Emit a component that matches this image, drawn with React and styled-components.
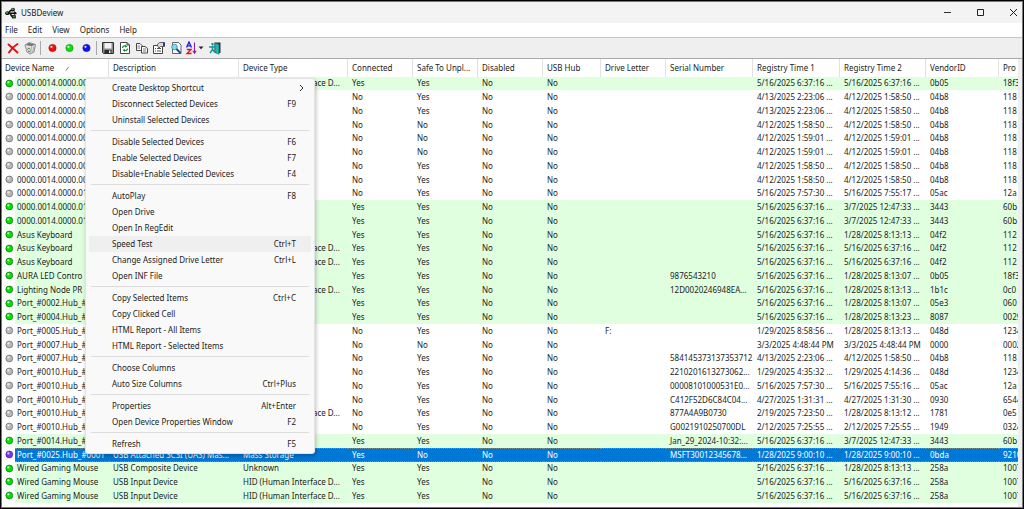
import React from "react";
import styled, { createGlobalStyle } from "styled-components";

const GlobalStyle = createGlobalStyle`
  * { box-sizing: border-box; }
  body { margin: 0; background: #fff; }
  body, button, table { font-family: "Noto Sans", "Open Sans", sans-serif; font-size: 8px; line-height: 12px; color: #1c1c1c; }
`;

const Frame = styled.div`
  position: relative;
  display: flex;
  flex-direction: column;
  min-height: 100vh;
  overflow: hidden;
  background: #fff;
  border: 1px solid #000;
`;

const Inner = styled.div`
  flex: 1;
  display: flex;
  flex-direction: column;
  border: 1px solid #7a7a7a;
`;

const TitleBar = styled.header`
  display: flex;
  align-items: center;
  height: 21px;
  padding-left: 3px;
  background: #f3f3f3;
`;

const Title = styled.h1`
  flex: 1;
  margin: 0 0 0 4px;
  font-size: 8px;
  font-weight: 400;
`;

const PlainButton = styled.button`
  display: flex;
  align-items: center;
  justify-content: center;
  margin: 0;
  padding: 0;
  border: 0;
  background: transparent;
`;

const CaptionButton = styled(PlainButton)`
  width: 33px;
  height: 21px;
  &:last-child { margin-right: -8px; }
`;

const MenuBar = styled.nav`
  display: flex;
  height: 15px;
  border-bottom: 1px solid #c6c6c6;
`;

const MenuBarButton = styled(PlainButton)`
  padding: 0 7px 0 3px;
`;

const Toolbar = styled.div`
  display: flex;
  align-items: center;
  height: 21px;
  padding-left: 2px;
  background: #efefef;
  border-bottom: 1px solid #a9a9a9;
`;

const ToolButton = styled(PlainButton)`
  width: ${(p) => (p.$wide ? 22 : 17)}px;
  height: 18px;
`;

const ToolSeparator = styled.span`
  width: 1px;
  height: 14px;
  margin: 0 2px;
  background: #a8a8a8;
`;

const ListView = styled.main`
  flex: 1;
  padding-bottom: 3px;
  border-right: 4px solid #efefef;
  overflow: hidden;
`;

const Table = styled.table`
  width: 100%;
  table-layout: fixed;
  border-collapse: separate;
  border-spacing: 0;
`;

const Col = styled.col`
  width: ${(p) => (p.$w ? `${p.$w}px` : "auto")};
`;

const HeadCell = styled.th`
  height: 18px;
  padding: 0 0 0 ${(p) => (p.$first ? 3 : 4)}px;
  font-weight: 400;
  text-align: left;
  white-space: nowrap;
  overflow: hidden;
  border-right: 1px solid #e2e2e2;
  &:last-child { border-right: 0; }
`;

const SortMark = styled.svg`
  margin-left: 11px;
`;

const rowColors = {
  on: ["#dfffdf", "#1c1c1c"],
  off: ["#ffffff", "#1c1c1c"],
  selected: ["#0078d7", "#ffffff"],
};

const Row = styled.tr`
  height: 14px;
  &:nth-child(4n + 1) { height: 13px; }
  color: ${(p) => rowColors[p.$state][1]};
`;

const Cell = styled.td`
  height: inherit;
  padding: 0 0 1px ${(p) => (p.$name ? 2 : 4)}px;
  background: ${(p) => rowColors[p.$state][0]};
  white-space: nowrap;
  overflow: hidden;
  ${(p) =>
    p.$state === "selected" &&
    "border-top: 1px dotted #6f8f9f; border-bottom: 1px dotted #6f8f9f; line-height: 11px;"}
`;

const LedCell = styled.td`
  height: inherit;
  padding: 0 0 1px 3px;
  line-height: 0;
`;

const Popup = styled.ul`
  position: absolute;
  left: 84px;
  top: 77px;
  width: 230px;
  margin: 0;
  padding: 1px 3px;
  list-style: none;
  background: #f9f9f9;
  border: 1px solid #e3e3e3;
  border-radius: 3px;
  box-shadow: 1px 2px 4px rgba(0, 0, 0, 0.25);
`;

const PopupButton = styled(PlainButton)`
  width: 100%;
  height: 16px;
  padding: 0 15px 0 23px;
  justify-content: space-between;
  border-radius: 2px;
  background: ${(p) => (p.$hot ? "#efefef" : "transparent")};
`;

const Divider = styled.li`
  height: 6px;
  padding: 2px 2px 3px;
  background: #dcdcdc content-box;
`;

const SubmenuArrow = styled.svg`
  margin-right: -8px;
`;

const Icon = ({ w = 14, children }) => (
  <svg width={w} height="14" viewBox={`0 0 ${w} 14`} aria-hidden="true">
    {children}
  </svg>
);

const UsbLogo = () => (
  <svg width="12" height="12" viewBox="0 0 12 12" aria-hidden="true">
    <path d="M2 6.3H10M3.5 6L5.5 3.5H8M5 6.5L7 9.5H9" fill="none" stroke="#111" strokeWidth="1.5" />
    <ellipse cx="2.3" cy="6.2" rx="2.1" ry="1.9" fill="#111" />
    <ellipse cx="2" cy="5.8" rx="1.2" ry="1" fill="#3d9a3d" />
    <circle cx="8" cy="2.6" r="1.9" fill="#111" />
    <circle cx="7.8" cy="2.3" r="1" fill="#4aa84a" />
    <path d="M9.2 4L12 6.2L9.2 8.3Z" fill="#111" />
    <path d="M7 8.2H10.8V11.4H7Z" fill="#111" />
    <path d="M7.8 9H9.8V10.4H7.8Z" fill="#3d9a3d" />
  </svg>
);

const Ball = ({ color, dark }) => (
  <Icon>
    <circle cx="7.5" cy="7" r="3.6" fill={color} stroke={dark} strokeWidth=".7" />
    <circle cx="6.4" cy="5.8" r="1.1" fill="#fff" opacity=".85" />
  </Icon>
);

const ledColors = {
  on: ["#00e400", "#087d08"],
  off: ["#b9b9b9", "#707070"],
  selected: ["#7a35e8", "#4a22a0"],
};

const Led = ({ state }) => (
  <svg width="9" height="9" viewBox="0 0 9 9" role="img" aria-label={state}>
    <circle cx="4.3" cy="4.5" r="3.4" fill={ledColors[state][0]} stroke={ledColors[state][1]} strokeWidth=".8" />
    <circle cx="3.3" cy="3.3" r="1.1" fill="#fff" opacity=".8" />
  </svg>
);

const icons = {
  remove: (
    <Icon>
      <path d="M2.5 3.500L11.500 11.500" fill="none" stroke="#e01010" strokeWidth="1.900" strokeLinecap="round" />
      <path d="M11.500 3C8 5 5 8 3 11.500" fill="none" stroke="#e01010" strokeWidth="1.900" strokeLinecap="round" />
    </Icon>
  ),
  uninstall: (
    <Icon>
      <path d="M2 4L6 1.500L12.500 3.500L11 11L7 13L4 11Z" fill="#e2e2e2" stroke="#777" strokeWidth=".8" />
      <path d="M2.500 4L6 2L12 3.500L8.500 5.300Z" fill="#777" />
      <path d="M8.700 5.500L7.500 12.500M11 5L9.700 11" fill="none" stroke="#999" strokeWidth=".7" />
      <path d="M4.500 8.500L5.700 7L7.200 8.300M7.200 9.500L6.300 10.700L5 10" fill="none" stroke="#2b8c2b" strokeWidth="1" />
    </Icon>
  ),
  save: (
    <Icon>
      <path d="M1.500 1.500H12.500V12.500H2.500L1.500 11.500Z" fill="#8a8a8a" stroke="#333" />
      <path d="M3.500 2H10.500V7.500H3.500Z" fill="#f2f2f2" />
      <path d="M3.500 9H10.500V12.500H3.500Z" fill="#2a2a2a" />
      <path d="M8 9.500H9.500V12H8Z" fill="#eee" />
    </Icon>
  ),
  refresh: (
    <Icon>
      <path d="M2.500 1.500H9L11.500 4V12.500H2.500Z" fill="#fff" stroke="#444" />
      <path d="M9 1.500V4H11.500" fill="none" stroke="#444" />
      <path d="M4.500 7C4.500 5 6.500 4.500 8 5.300M9.500 7.500C9.500 9.500 7.500 10 6 9.200" fill="none" stroke="#109030" strokeWidth="1.2" />
      <path d="M7.300 3.500L9.500 5.800L7 6.500ZM6.700 11L4.500 8.700L7 8Z" fill="#109030" />
    </Icon>
  ),
  copy: (
    <Icon>
      <path d="M1.500 2.500H5L7 4.500V9.500H1.500Z" fill="#fff" stroke="#333" strokeWidth=".9" />
      <path d="M2.500 5H5M2.500 7H5" stroke="#555" strokeWidth=".8" />
      <path d="M6.500 5.500H10L12.500 7.500V12H6.500Z" fill="#fff" stroke="#333" strokeWidth=".9" />
      <path d="M8 8H11M8 10H11" stroke="#555" strokeWidth=".8" />
    </Icon>
  ),
  properties: (
    <Icon>
      <path d="M1.500 4.500H10.500V12.500H1.500Z" fill="#fff" stroke="#444" />
      <path d="M3 7.500H4M3 10H4M5 7.500H9M5 10H9" stroke="#555" />
      <path d="M5 4L7.500 1.500H12.500V5.500H8.500L7 7Z" fill="#d8d8e4" stroke="#444" strokeWidth=".8" />
      <path d="M11 1.500H13V5H11Z" fill="#34349c" />
    </Icon>
  ),
  find: (
    <Icon>
      <path d="M3.500 1.500H9.500L12 4V12.500H3.500Z" fill="#fff" stroke="#555" strokeWidth=".9" />
      <circle cx="5.500" cy="6" r="2.800" fill="#7cdcf4" stroke="#3d8bac" strokeWidth=".8" />
      <path d="M7.500 8L11.500 12" stroke="#1a3c9c" strokeWidth="1.800" />
    </Icon>
  ),
  sort: (
    <Icon w={20}>
      <path d="M1.500 6.500L4 1L6.500 6.500M2.500 4.800H5.500" fill="none" stroke="#1a1af0" strokeWidth="1.300" />
      <path d="M1.800 8.500H6L2 12.500H6.500" fill="none" stroke="#e81010" strokeWidth="1.300" />
      <path d="M9.500 1.500V12M7.800 9.800L9.500 12.200L11.200 9.800" fill="none" stroke="#8a1f9c" strokeWidth="1.100" />
      <path d="M13.500 5.500H18.500L16 8.300Z" fill="#222" />
    </Icon>
  ),
  exit: (
    <Icon>
      <path d="M6.500 1.500H12.500V12H6.500Z" fill="#333" />
      <path d="M7 2L11 3.500V13.300L7 11.500Z" fill="#22b5b5" stroke="#116a6a" strokeWidth=".6" />
      <circle cx="4.500" cy="3" r="1.200" fill="#119a9a" />
      <path d="M1 6H7M4.500 4.500V8.500L2 12M4.500 8.500L6.500 11" fill="none" stroke="#119a9a" strokeWidth="1.500" />
    </Icon>
  ),
};

const tools = [
  ["Delete", icons.remove],
  ["Uninstall", icons.uninstall],
  null,
  ["Disconnect", <Ball color="#f01010" dark="#a00808" />],
  ["Enable", <Ball color="#10e010" dark="#089008" />],
  ["Disable", <Ball color="#1515f0" dark="#0808a0" />],
  null,
  ["Save", icons.save],
  ["Refresh", icons.refresh],
  ["Copy", icons.copy],
  ["Properties", icons.properties],
  ["Find", icons.find],
  ["Sort", icons.sort, true],
  ["Exit", icons.exit],
];

const columns = [
  ["Description", 130],
  ["Device Type", 109],
  ["Connected", 65],
  ["Safe To Unpl...", 65],
  ["Disabled", 65],
  ["USB Hub", 58],
  ["Drive Letter", 65],
  ["Serial Number", 87],
  ["Registry Time 1", 87],
  ["Registry Time 2", 86],
  ["VendorID", 73],
  ["Pro", 0],
];

const HID = "HID (Human Interface D...";
const COMP = "USB Composite Device";
const INPUT = "USB Input Device";
const MASS = "Mass Storage";
const BOOT = "5/16/2025 6:37:16 ...";
const A = "4/12/2025 1:58:50 ...";
const B = "4/12/2025 1:59:01 ...";
const C = "4/13/2025 2:23:06 ...";
const D = "1/28/2025 8:13:13 ...";
const MAR = "3/7/2025 12:47:33 ...";

// state, name, description, type, safe to unplug, drive, serial, time 1, time 2, vendor, product
const devices = [
  ["on", "0000.0014.0000.004", "", HID, "Yes", "", "", BOOT, BOOT, "0b05", "18f3"],
  ["off", "0000.0014.0000.007", "", "", "Yes", "", "", C, A, "04b8", "118"],
  ["off", "0000.0014.0000.007", "", "", "Yes", "", "", C, A, "04b8", "118"],
  ["off", "0000.0014.0000.007", "", "", "No", "", "", A, A, "04b8", "118"],
  ["off", "0000.0014.0000.007", "", "", "No", "", "", B, B, "04b8", "118"],
  ["off", "0000.0014.0000.007", "", "", "No", "", "", B, B, "04b8", "118"],
  ["off", "0000.0014.0000.007", "", "", "Yes", "", "", A, A, "04b8", "118"],
  ["off", "0000.0014.0000.007", "", "", "Yes", "", "", A, A, "04b8", "118"],
  ["off", "0000.0014.0000.010", "", "", "Yes", "", "", "5/16/2025 7:57:30 ...", "5/16/2025 7:55:17 ...", "05ac", "12a"],
  ["on", "0000.0014.0000.014", "", "", "Yes", "", "", BOOT, MAR, "3443", "60b"],
  ["on", "0000.0014.0000.014", "", "", "Yes", "", "", BOOT, MAR, "3443", "60b"],
  ["on", "Asus Keyboard", "", "", "Yes", "", "", BOOT, D, "04f2", "112"],
  ["on", "Asus Keyboard", "", HID, "Yes", "", "", BOOT, BOOT, "04f2", "112"],
  ["on", "Asus Keyboard", "", HID, "Yes", "", "", BOOT, BOOT, "04f2", "112"],
  ["on", "AURA LED Contro", "", "", "Yes", "", "9876543210", BOOT, "1/28/2025 8:13:07 ...", "0b05", "18f3"],
  ["on", "Lighting Node PR", "", HID, "Yes", "", "12D0020246948EA...", BOOT, D, "1b1c", "0c0"],
  ["on", "Port_#0002.Hub_#", "", "", "Yes", "", "", BOOT, "1/28/2025 8:13:07 ...", "05e3", "060"],
  ["on", "Port_#0004.Hub_#", "", "", "Yes", "", "", BOOT, "1/28/2025 8:13:23 ...", "8087", "0029"],
  ["off", "Port_#0005.Hub_#", "", "", "Yes", "F:", "", "1/29/2025 8:58:56 ...", D, "048d", "1234"],
  ["off", "Port_#0007.Hub_#", "", "", "No", "", "", "3/3/2025 4:48:44 PM", "3/3/2025 4:48:44 PM", "0000", "0002"],
  ["off", "Port_#0007.Hub_#", "", "", "Yes", "", "584145373137353712", C, A, "04b8", "118"],
  ["off", "Port_#0010.Hub_#", "", "", "Yes", "", "2210201613273062...", "1/29/2025 4:35:32 ...", "1/29/2025 4:14:36 ...", "048d", "1234"],
  ["off", "Port_#0010.Hub_#", "", "", "Yes", "", "00008101000531E0...", "5/16/2025 7:57:30 ...", "5/16/2025 7:55:16 ...", "05ac", "12a"],
  ["off", "Port_#0010.Hub_#", "", "", "Yes", "", "C412F52D6C84C04...", "4/27/2025 1:31:31 ...", "4/27/2025 1:31:30 ...", "0930", "6544"],
  ["off", "Port_#0010.Hub_#", "", HID, "Yes", "", "877A4A9B0730", "2/19/2025 7:23:50 ...", "1/28/2025 8:13:12 ...", "1781", "0e5"],
  ["off", "Port_#0010.Hub_#", "", "", "Yes", "", "G0021910250700DL", "2/12/2025 7:25:55 ...", "2/12/2025 7:25:55 ...", "1949", "0324"],
  ["on", "Port_#0014.Hub_#", "", "", "Yes", "", "Jan_29_2024-10:32:...", BOOT, MAR, "3443", "60b"],
  ["selected", "Port_#0025.Hub_#0001", "USB Attached SCSI (UAS) Mas...", MASS, "No", "", "MSFT30012345678...", "1/28/2025 9:00:10 ...", "1/28/2025 9:00:10 ...", "0bda", "9210"],
  ["on", "Wired Gaming Mouse", COMP, "Unknown", "Yes", "", "", BOOT, D, "258a", "1007"],
  ["on", "Wired Gaming Mouse", INPUT, HID, "Yes", "", "", BOOT, BOOT, "258a", "1007"],
  ["on", "Wired Gaming Mouse", INPUT, HID, "Yes", "", "", BOOT, BOOT, "258a", "1007"],
];

const popupItems = [
  ["Create Desktop Shortcut", ">"],
  ["Disconnect Selected Devices", "F9"],
  ["Uninstall Selected Devices"],
  null,
  ["Disable Selected Devices", "F6"],
  ["Enable Selected Devices", "F7"],
  ["Disable+Enable Selected Devices", "F4"],
  null,
  ["AutoPlay", "F8"],
  ["Open Drive"],
  ["Open In RegEdit"],
  ["Speed Test", "Ctrl+T"],
  ["Change Assigned Drive Letter", "Ctrl+L"],
  ["Open INF File"],
  null,
  ["Copy Selected Items", "Ctrl+C"],
  ["Copy Clicked Cell"],
  ["HTML Report - All Items"],
  ["HTML Report - Selected Items"],
  null,
  ["Choose Columns"],
  ["Auto Size Columns", "Ctrl+Plus"],
  null,
  ["Properties", "Alt+Enter"],
  ["Open Device Properties Window", "F2"],
  null,
  ["Refresh", "F5"],
];

const DeviceRow = ({ device }) => {
  const [state, name, description, type, safe, ...rest] = device;
  const connected = state === "off" ? "No" : "Yes";
  const values = [description, type, connected, safe, "No", "No", ...rest];
  return (
    <Row $state={state}>
      <LedCell>
        <Led state={state} />
      </LedCell>
      <Cell $state={state} $name>{name}</Cell>
      {values.map((value, i) => (
        <Cell key={i} $state={state}>{value}</Cell>
      ))}
    </Row>
  );
};

const ContextMenu = () => (
  <Popup>
    {popupItems.map((item, i) =>
      item ? (
        <li key={i}>
          <PopupButton type="button" $hot={item[0] === "Speed Test"}>
            <span>{item[0]}</span>
            {item[1] === ">" ? (
              <SubmenuArrow width="5" height="8" viewBox="0 0 5 8" aria-hidden="true">
                <path d="M1 1L4 4L1 7" fill="none" stroke="#333" />
              </SubmenuArrow>
            ) : (
              <span>{item[1]}</span>
            )}
          </PopupButton>
        </li>
      ) : (
        <Divider key={i} role="separator" />
      )
    )}
  </Popup>
);

export default function App() {
  return (
    <Frame>
      <GlobalStyle />
      <Inner>
        <TitleBar>
          <UsbLogo />
          <Title>USBDeview</Title>
          <CaptionButton type="button" aria-label="Minimize">
            <svg width="9" height="9" viewBox="0 0 9 9"><path d="M1 4.500H8" stroke="#333" /></svg>
          </CaptionButton>
          <CaptionButton type="button" aria-label="Maximize">
            <svg width="9" height="9" viewBox="0 0 9 9"><path d="M1.500 1.500H7.500V7.500H1.500Z" fill="none" stroke="#222" /></svg>
          </CaptionButton>
          <CaptionButton type="button" aria-label="Close">
            <svg width="9" height="9" viewBox="0 0 9 9"><path d="M1 1L8 8M8 1L1 8" stroke="#222" /></svg>
          </CaptionButton>
        </TitleBar>
        <MenuBar>
          {["File", "Edit", "View", "Options", "Help"].map((label) => (
            <MenuBarButton type="button" key={label}>{label}</MenuBarButton>
          ))}
        </MenuBar>
        <Toolbar role="toolbar">
          {tools.map((tool, i) =>
            tool ? (
              <ToolButton type="button" key={i} aria-label={tool[0]} $wide={tool[2]}>{tool[1]}</ToolButton>
            ) : (
              <ToolSeparator key={i} />
            )
          )}
        </Toolbar>
        <ListView>
          <Table>
            <colgroup>
              <Col $w={13} />
              <Col $w={94} />
              {columns.map(([label, w]) => <Col key={label} $w={w} />)}
            </colgroup>
            <thead>
              <tr>
                <HeadCell colSpan={2} $first>
                  Device Name
                  <SortMark width="5" height="5" viewBox="0 0 5 5" aria-hidden="true">
                    <path d="M1 4.500L3.500 1" stroke="#777" strokeWidth=".9" />
                  </SortMark>
                </HeadCell>
                {columns.map(([label]) => <HeadCell key={label}>{label}</HeadCell>)}
              </tr>
            </thead>
            <tbody>
              {devices.map((device, i) => <DeviceRow key={i} device={device} />)}
            </tbody>
          </Table>
        </ListView>
      </Inner>
      <ContextMenu />
    </Frame>
  );
}
